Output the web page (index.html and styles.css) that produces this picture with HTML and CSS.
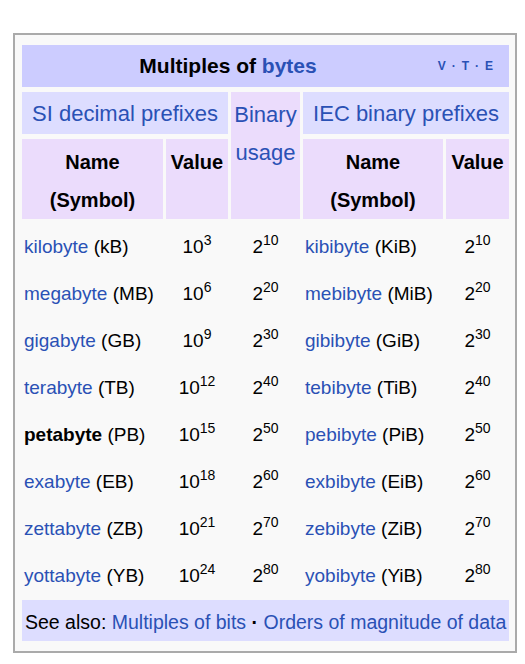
FILE: index.html
```html
<!DOCTYPE html>
<html>
<head>
<meta charset="utf-8">
<link rel="stylesheet" href="styles.css">
</head>
<body>
<div class="navbox">
  <table class="nb">
    <colgroup>
      <col class="c1"><col class="c2"><col class="c3"><col class="c4"><col class="c5">
    </colgroup>
    <tr>
      <th colspan="5" class="title">
        <div class="title-inner">
          <span class="title-text">Multiples of <a>bytes</a></span>
          <span class="navbar"><a>V</a><span class="sep">·</span><a>T</a><span class="sep">·</span><a>E</a></span>
        </div>
      </th>
    </tr>
    <tr>
      <th colspan="2" class="group"><a>SI decimal prefixes</a></th>
      <th rowspan="2" class="binary"><a>Binary<br>usage</a></th>
      <th colspan="2" class="group"><a>IEC binary prefixes</a></th>
    </tr>
    <tr>
      <th class="colhead">Name<br>(Symbol)</th>
      <th class="colhead">Value</th>
      <th class="colhead">Name<br>(Symbol)</th>
      <th class="colhead">Value</th>
    </tr>
    <tr class="row"><td class="name"><a>kilobyte</a> (kB)</td><td class="num">10<sup>3</sup></td><td class="num">2<sup>10</sup></td><td class="name"><a>kibibyte</a> (KiB)</td><td class="num">2<sup>10</sup></td></tr>
    <tr class="row"><td class="name"><a>megabyte</a> (MB)</td><td class="num">10<sup>6</sup></td><td class="num">2<sup>20</sup></td><td class="name"><a>mebibyte</a> (MiB)</td><td class="num">2<sup>20</sup></td></tr>
    <tr class="row"><td class="name"><a>gigabyte</a> (GB)</td><td class="num">10<sup>9</sup></td><td class="num">2<sup>30</sup></td><td class="name"><a>gibibyte</a> (GiB)</td><td class="num">2<sup>30</sup></td></tr>
    <tr class="row"><td class="name"><a>terabyte</a> (TB)</td><td class="num">10<sup>12</sup></td><td class="num">2<sup>40</sup></td><td class="name"><a>tebibyte</a> (TiB)</td><td class="num">2<sup>40</sup></td></tr>
    <tr class="row"><td class="name"><b>petabyte</b> (PB)</td><td class="num">10<sup>15</sup></td><td class="num">2<sup>50</sup></td><td class="name"><a>pebibyte</a> (PiB)</td><td class="num">2<sup>50</sup></td></tr>
    <tr class="row"><td class="name"><a>exabyte</a> (EB)</td><td class="num">10<sup>18</sup></td><td class="num">2<sup>60</sup></td><td class="name"><a>exbibyte</a> (EiB)</td><td class="num">2<sup>60</sup></td></tr>
    <tr class="row"><td class="name"><a>zettabyte</a> (ZB)</td><td class="num">10<sup>21</sup></td><td class="num">2<sup>70</sup></td><td class="name"><a>zebibyte</a> (ZiB)</td><td class="num">2<sup>70</sup></td></tr>
    <tr class="row"><td class="name"><a>yottabyte</a> (YB)</td><td class="num">10<sup>24</sup></td><td class="num">2<sup>80</sup></td><td class="name"><a>yobibyte</a> (YiB)</td><td class="num">2<sup>80</sup></td></tr>
    <tr>
      <td colspan="5" class="footer">See also: <a>Multiples of bits</a> <b class="dot">·</b> <a>Orders of magnitude of data</a></td>
    </tr>
  </table>
</div>
</body>
</html>
```

FILE: styles.css
```css
html, body {
  margin: 0;
  padding: 0;
  background: #ffffff;
}

body {
  font-family: "Liberation Sans", Arial, sans-serif;
  color: #000;
  padding: 33px 0 0 13px;
}

.navbox {
  border: 2px solid #aaaaaa;
  background: #f9f9f9;
  padding: 5px 3px 5px 4px;
  box-sizing: content-box;
  width: 493px;
}

.nb {
  table-layout: fixed;
  width: 493px;
  border-collapse: separate;
  border-spacing: 3px 5px;
  margin: 0;
}

.c1 { width: 141px; }
.c2 { width: 62px; }
.c3 { width: 69px; }
.c4 { width: 140px; }
.c5 { width: 63px; }

a {
  color: #2a51b5;
  text-decoration: none;
}

th, td {
  padding: 0;
}

.title {
  background: #ccccff;
  height: 42px;
  font-size: 21px;
  font-weight: bold;
}

.title-inner {
  display: flex;
  align-items: center;
}

.title-text {
  flex: 1;
  text-align: center;
}

.navbar {
  width: 75px;
  box-sizing: border-box;
  padding-right: 16px;
  text-align: right;
  font-size: 12px;
  font-weight: bold;
  white-space: nowrap;
}

.navbar .sep {
  display: inline-block;
  padding: 0 6px;
  color: #2a51b5;
}

.group {
  background: #ddddff;
  height: 42px;
  font-size: 22px;
  font-weight: normal;
  vertical-align: middle;
  padding-top: 2px;
  box-sizing: border-box;
}

.binary {
  background: #ebdcfc;
  font-size: 22px;
  font-weight: normal;
  line-height: 38px;
  vertical-align: top;
  padding-top: 4px;
}

.colhead {
  background: #ebdcfc;
  height: 80px;
  font-size: 20px;
  font-weight: bold;
  line-height: 38px;
  vertical-align: top;
  padding-top: 4px;
  box-sizing: border-box;
}

.row td {
  height: 42px;
  box-sizing: border-box;
  padding-top: 4px;
  font-size: 19px;
  line-height: 24px;
  vertical-align: middle;
  white-space: nowrap;
}

.row td.name {
  text-align: left;
  padding-left: 2px;
}

.num {
  text-align: center;
}

sup {
  font-size: 14px;
  vertical-align: 8px;
  line-height: 0;
}

.footer {
  background: #ddddff;
  height: 41px;
  box-sizing: border-box;
  padding-top: 3px;
  font-size: 19.5px;
  padding-left: 3px;
  vertical-align: middle;
  white-space: nowrap;
}

.footer .dot {
  font-weight: bold;
}
```
